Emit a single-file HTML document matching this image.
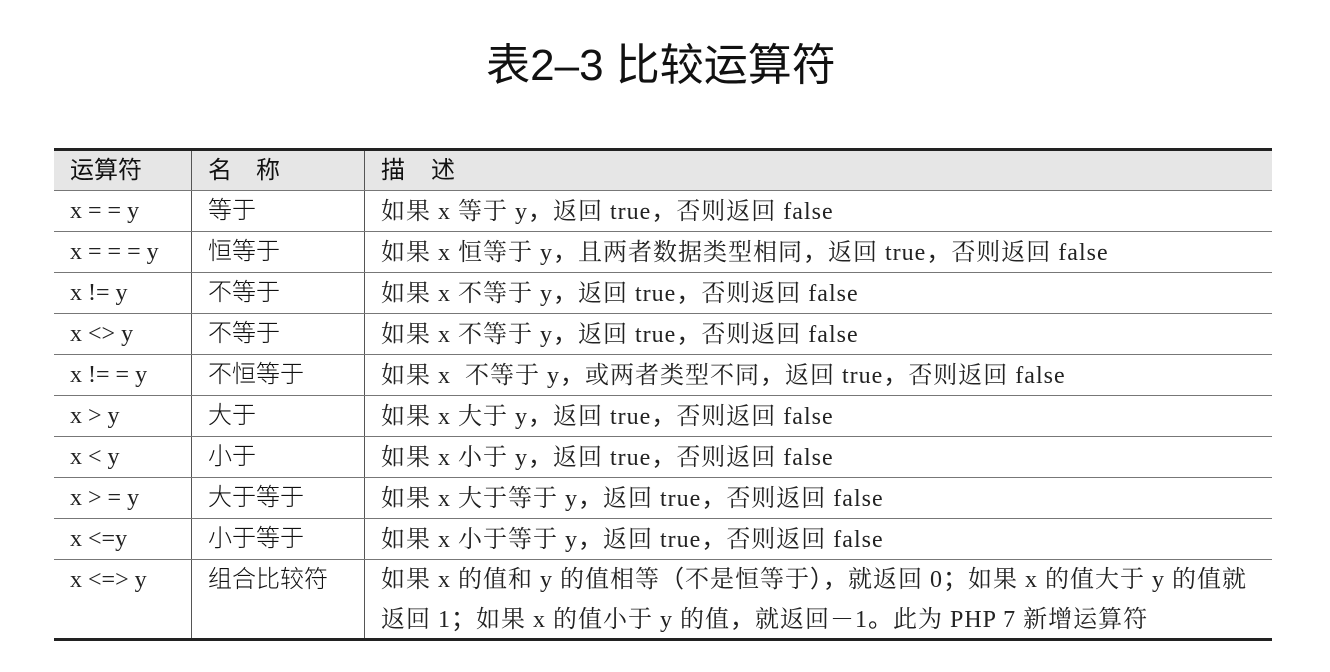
<!DOCTYPE html>
<html><head><meta charset="utf-8"><style>
body{margin:0;width:1330px;height:672px;background:#fff;overflow:hidden;position:relative;font-family:"Liberation Serif","Noto Serif CJK SC",serif;color:#222}
.title{position:absolute;top:29px;left:0;width:1322px;text-align:center;font-family:"Liberation Sans","Noto Sans CJK SC",sans-serif;font-size:44px;color:#111}
table{position:absolute;left:54px;top:148px;width:1218px;border-collapse:collapse;border-top:3px solid #222;border-bottom:3px solid #222;font-size:24px;table-layout:fixed}
td{border-bottom:1px solid #777;height:40px;padding:0 0 0 16px;vertical-align:middle;line-height:28px;white-space:nowrap;overflow:visible;letter-spacing:1px}
td.c1{width:121px;border-right:1px solid #555;letter-spacing:0}
td.c2{width:156px;border-right:1px solid #555;font-family:"Liberation Sans","Noto Sans CJK SC",sans-serif;font-weight:300;color:#111;letter-spacing:0}
tr.h td{background:#e6e6e6;font-family:"Liberation Sans","Noto Sans CJK SC",sans-serif;height:39px;color:#111;font-weight:400}
tr.last td{vertical-align:top;height:78px;border-bottom:none;line-height:40px;padding-top:0}
tr.last td div{height:78px;overflow:hidden}
.p{font-family:"Noto Sans CJK SC",sans-serif;line-height:1}
</style></head><body>
<div class="title">表2–3 比较运算符</div>
<table>
<tr class="h"><td class="c1">运算符</td><td class="c2">名　称</td><td>描　述</td></tr>
<tr><td class="c1">x = = y</td><td class="c2">等于</td><td>如果 x 等于 y<span class="p">，</span>返回 true<span class="p">，</span>否则返回 false</td></tr>
<tr><td class="c1">x = = = y</td><td class="c2">恒等于</td><td>如果 x 恒等于 y<span class="p">，</span>且两者数据类型相同<span class="p">，</span>返回 true<span class="p">，</span>否则返回 false</td></tr>
<tr><td class="c1">x != y</td><td class="c2">不等于</td><td>如果 x 不等于 y<span class="p">，</span>返回 true<span class="p">，</span>否则返回 false</td></tr>
<tr><td class="c1">x &lt;&gt; y</td><td class="c2">不等于</td><td>如果 x 不等于 y<span class="p">，</span>返回 true<span class="p">，</span>否则返回 false</td></tr>
<tr><td class="c1">x != = y</td><td class="c2">不恒等于</td><td>如果 x &nbsp;不等于 y<span class="p">，</span>或两者类型不同<span class="p">，</span>返回 true<span class="p">，</span>否则返回 false</td></tr>
<tr><td class="c1">x &gt; y</td><td class="c2">大于</td><td>如果 x 大于 y<span class="p">，</span>返回 true<span class="p">，</span>否则返回 false</td></tr>
<tr><td class="c1">x &lt; y</td><td class="c2">小于</td><td>如果 x 小于 y<span class="p">，</span>返回 true<span class="p">，</span>否则返回 false</td></tr>
<tr><td class="c1">x &gt; = y</td><td class="c2">大于等于</td><td>如果 x 大于等于 y<span class="p">，</span>返回 true<span class="p">，</span>否则返回 false</td></tr>
<tr><td class="c1">x &lt;=y</td><td class="c2">小于等于</td><td>如果 x 小于等于 y<span class="p">，</span>返回 true<span class="p">，</span>否则返回 false</td></tr>
<tr class="last"><td class="c1"><div>x &lt;=&gt; y</div></td><td class="c2"><div>组合比较符</div></td><td><div>如果 x 的值和 y 的值相等<span class="p">（</span>不是恒等于<span class="p">）</span><span class="p">，</span>就返回 0<span class="p">；</span>如果 x 的值大于 y 的值就<br>返回 1<span class="p">；</span>如果 x 的值小于 y 的值<span class="p">，</span>就返回－1<span class="p">。</span>此为 PHP 7 新增运算符</div></td></tr>
</table>
</body></html>
